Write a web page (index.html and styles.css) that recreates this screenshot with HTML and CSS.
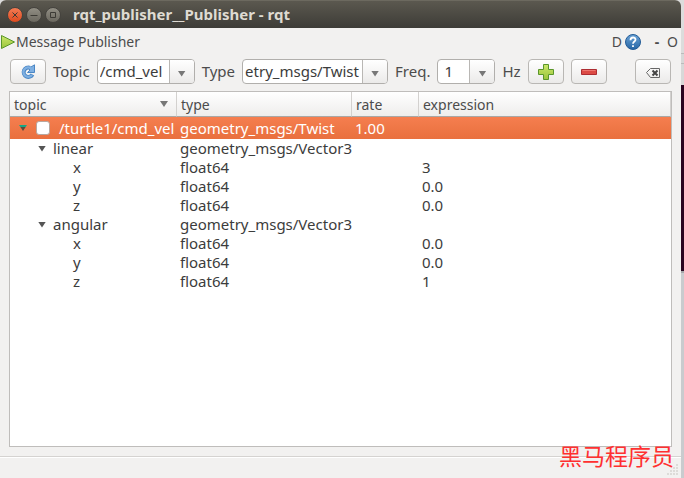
FILE: index.html
```html
<!DOCTYPE html>
<html lang="en">
<head>
<meta charset="utf-8">
<title>rqt_publisher__Publisher - rqt</title>
<link rel="stylesheet" href="styles.css">
</head>
<body>
<div class="desktop">
<main class="window">
  <header class="titlebar">
    <button class="wm close" aria-label="Close"><svg viewBox="0 0 14 14"><path d="M4.500 4.500l5 5M9.500 4.500l-5 5"/></svg></button>
    <button class="wm" aria-label="Minimize"><svg viewBox="0 0 14 14"><path d="M3.500 7.500h7"/></svg></button>
    <button class="wm" aria-label="Maximize"><svg viewBox="0 0 14 14"><path d="M4.500 4.500h5v5h-5z"/></svg></button>
    <h1>rqt_publisher__Publisher - rqt</h1>
  </header>

  <div class="dock-title">
    <svg class="play" viewBox="0 0 16 16"><defs><linearGradient id="lime" x2="0" y2="1"><stop stop-color="#cbe86b"/><stop offset="1" stop-color="#9bc43c"/></linearGradient></defs><path d="M1.500 1.500v13L14.500 8z" fill="url(#lime)" stroke="#5a962b"/></svg>
    <h2>Message Publisher</h2>
    <button class="flat">D</button>
    <button class="flat help" aria-label="Help"><svg viewBox="0 0 16 16"><defs><linearGradient id="blue" x2="0" y2="1"><stop stop-color="#6ba3d6"/><stop offset="1" stop-color="#2565a5"/></linearGradient></defs><circle cx="8" cy="8" r="7.500" fill="url(#blue)" stroke="#245c96"/><path d="M5.500 6.200C5.500 2.600 10.600 2.800 10.500 5.700C10.400 7.500 8 7.500 8 9.800M8 11.300v1.700" fill="none" stroke="#fff" stroke-width="1.800"/></svg></button>
    <button class="flat dash">-</button>
    <button class="flat">O</button>
  </div>

  <div class="toolbar">
    <button class="tool" aria-label="Refresh"><svg viewBox="0 0 16 16"><path d="M12.500 10.500A4.700 4.700 0 1 1 10 3.800" fill="none" stroke="#4a86c4" stroke-width="4"/><path d="M14.500.8v7.700H7.500L10 6 8.500 4.500z" fill="#7fb0e2" stroke="#4a86c4"/><path d="M12 10.800A4.700 4.700 0 1 1 11.200 4.600" fill="none" stroke="#7fb0e2" stroke-width="2.200"/></svg></button>
    <label for="topic">Topic</label>
    <div class="combo topic"><input id="topic" value="/cmd_vel"><button aria-label="Show topics"><i class="arrow"></i></button></div>
    <label for="type">Type</label>
    <div class="combo type"><input id="type" value="etry_msgs/Twist"><button aria-label="Show types"><i class="arrow"></i></button></div>
    <label for="freq">Freq.</label>
    <div class="combo freq"><input id="freq" value="1"><button aria-label="Show frequencies"><i class="arrow"></i></button></div>
    <label for="freq">Hz</label>
    <button class="tool" aria-label="Add"><svg viewBox="0 0 16 16"><path d="M5.500.5h5v5h5v5h-5v5h-5v-5h-5v-5h5z" fill="url(#lime)" stroke="#5a962b"/></svg></button>
    <button class="tool" aria-label="Remove"><svg viewBox="0 0 16 16"><path d="M.5 5.500h15v5H.5z" fill="#dc4b45" stroke="#ad2d32"/><path d="M1.500 6.500h13" stroke="#ee7770"/></svg></button>
    <button class="tool clear" aria-label="Clear"><svg viewBox="0 0 16 16"><path d="M1.500 8.500L5.500 4.500h9v9h-9z" fill="none" stroke="#666"/><path d="M7.500 6.500l5 5M12.500 6.500l-5 5" stroke="#444" stroke-width="2"/></svg></button>
  </div>

  <div class="tree">
    <table>
      <colgroup><col class="c-topic"><col class="c-type"><col class="c-rate"><col></colgroup>
      <thead><tr><th><div class="sort">topic<i class="arrow"></i></div></th><th>type</th><th>rate</th><th>expression</th></tr></thead>
      <tbody>
        <tr class="selected"><td><div class="node"><i class="arrow teal"></i><input type="checkbox" aria-label="Publish /turtle1/cmd_vel">/turtle1/cmd_vel</div></td><td>geometry_msgs/Twist</td><td>1.00</td><td></td></tr>
        <tr><td><div class="node child"><i class="arrow dark"></i>linear</div></td><td>geometry_msgs/Vector3</td><td></td><td></td></tr>
        <tr><td class="leaf">x</td><td>float64</td><td></td><td>3</td></tr>
        <tr><td class="leaf">y</td><td>float64</td><td></td><td>0.0</td></tr>
        <tr><td class="leaf">z</td><td>float64</td><td></td><td>0.0</td></tr>
        <tr><td><div class="node child"><i class="arrow dark"></i>angular</div></td><td>geometry_msgs/Vector3</td><td></td><td></td></tr>
        <tr><td class="leaf">x</td><td>float64</td><td></td><td>0.0</td></tr>
        <tr><td class="leaf">y</td><td>float64</td><td></td><td>0.0</td></tr>
        <tr><td class="leaf">z</td><td>float64</td><td></td><td>1</td></tr>
      </tbody>
    </table>
  </div>

  <footer class="status">
    <svg class="grip" viewBox="0 0 12 12"><path d="M9 1h2M9 4h2M6 4h2M9 7h2M6 7h2M3 7h2M9 10h2M6 10h2M3 10h2M0 10h2" stroke="#dddbd8" stroke-width="2"/></svg>
  </footer>
</main>
<p class="watermark" lang="zh">黑马程序员</p>
</div>
</body>
</html>
```

FILE: styles.css
```css
* { box-sizing: border-box; }
body {
  margin: 0;
  font: 15px/19px "Noto Sans", "Open Sans", sans-serif;
  color: #4c4c4c;
}
button, input { font: inherit; color: inherit; margin: 0; padding: 0; }
h1, h2, p { margin: 0; }
.desktop {
  position: relative;
  height: 100vh;
  padding-right: 3px;
  background: linear-gradient(#dcdcdc 53px, #bbb 53px 54px, #d8d8d8 54px 63px, #bbb 63px 64px, #d8d8d8 64px 85px, #2a0420 85px 271px, #a5a7aa 271px 273px, #c9cbce 273px);
}
.window {
  height: 100%;
  display: flex;
  flex-direction: column;
  background: #f2f1f0;
  border-radius: 6px 6px 0 0;
  overflow: hidden;
}

.titlebar {
  flex: none;
  height: 28px;
  display: flex;
  align-items: center;
  gap: 3px;
  padding-left: 7px;
  background: linear-gradient(#5b584f, #3d3c37);
  border-top: 1px solid #6c695f;
}
.titlebar h1 {
  margin-left: 9px;
  font-size: 15px;
  font-weight: 700;
  color: #dfdbd2;
}
.wm {
  width: 16px;
  height: 16px;
  border: 1px solid #45433e;
  border-radius: 50%;
  background: linear-gradient(#918e84, #6b685f);
}
.wm.close { background: linear-gradient(#f47c54, #df4a1e); }
.wm svg { display: block; width: 14px; height: 14px; fill: none; stroke: #3c3a35; stroke-width: 1; }

.dock-title {
  flex: none;
  height: 27px;
  display: flex;
  align-items: center;
  padding-right: 3px;
  font-size: 14px;
}
.play { width: 16px; height: 16px; }
.dock-title h2 { flex: 1; font-size: 14px; font-weight: 400; }
.flat { border: 0; background: none; }
.help { margin: 0 13px 0 3px; }
.help svg { display: block; width: 16px; height: 16px; }
.dash { width: 6px; margin-right: 7px; font-weight: 700; }

.toolbar {
  flex: none;
  display: flex;
  align-items: center;
  gap: 7px;
  padding: 4px 10px 7px;
}
.tool {
  width: 36px;
  height: 25px;
  display: flex;
  align-items: center;
  justify-content: center;
  border: 1px solid #b9b7b4;
  border-radius: 4px;
  background: linear-gradient(#fff, #ebeae9);
}
.tool svg { width: 16px; height: 16px; }
.clear { margin-left: auto; }
.combo {
  height: 25px;
  display: flex;
  border: 1px solid #b1afac;
  border-radius: 4px;
  background: #fff;
  overflow: hidden;
}
.combo input { flex: 1; min-width: 0; border: 0; background: none; padding-left: 2px; color: #3c3c3c; }
.combo button {
  width: 25px;
  display: flex;
  align-items: center;
  justify-content: center;
  padding-top: 4px;
  border: 0;
  border-left: 1px solid #b9b7b4;
  background: linear-gradient(#fff, #ebeae9);
}
.topic { width: 98px; }
.type { width: 146px; }
.freq { width: 58px; }
.freq input { padding-left: 6px; }

.arrow {
  flex: none;
  width: 8px;
  height: 6px;
  background: #777;
  clip-path: polygon(0 0, 100% 0, 50% 100%);
}
.arrow.dark { background: #555; }
.arrow.teal { background: linear-gradient(#16a785 2px, #5d4b3c 2px); }

.tree {
  flex: 1;
  min-height: 0;
  margin: 0 9px;
  border: 1px solid #bfbdbb;
  background: #fff;
}
table { width: 100%; table-layout: fixed; border-collapse: separate; border-spacing: 0; }
.c-topic { width: 167px; }
.c-type { width: 175px; }
.c-rate { width: 67px; }
th {
  height: 25px;
  padding: 0 4px;
  text-align: left;
  font-size: 14px;
  font-weight: 400;
  background: linear-gradient(#fff, #eeedec);
  border-right: 1px solid #d3d1cf;
  border-bottom: 1px solid #a9a7a5;
}
.sort { display: flex; align-items: center; justify-content: space-between; padding-right: 4px; }
td { height: 19px; padding: 0 0 0 3px; white-space: nowrap; color: #3c3c3c; }
.selected td { height: 22px; color: #fff; background: linear-gradient(#f57e4f, #e9703e); }
.node { display: flex; align-items: center; padding-left: 6px; }
.node.child { gap: 7px; padding-left: 25px; }
.leaf { padding-left: 63px; }
.node input {
  appearance: none;
  flex: none;
  width: 14px;
  height: 14px;
  margin: 0 9px;
  border: 1px solid #b8a79f;
  border-radius: 3px;
  background: #fff;
}

.status {
  flex: none;
  height: 22px;
  margin-top: 9px;
  display: flex;
  align-items: flex-end;
  justify-content: flex-end;
  padding: 2px;
  border-top: 1px solid #d5d3d1;
  box-shadow: inset 0 1px #fff;
}
.grip { width: 12px; height: 12px; }
.watermark {
  position: absolute;
  right: 10px;
  bottom: 8px;
  font: 23px/30px "Noto Sans CJK SC", sans-serif;
  color: #ff3030;
}
```
